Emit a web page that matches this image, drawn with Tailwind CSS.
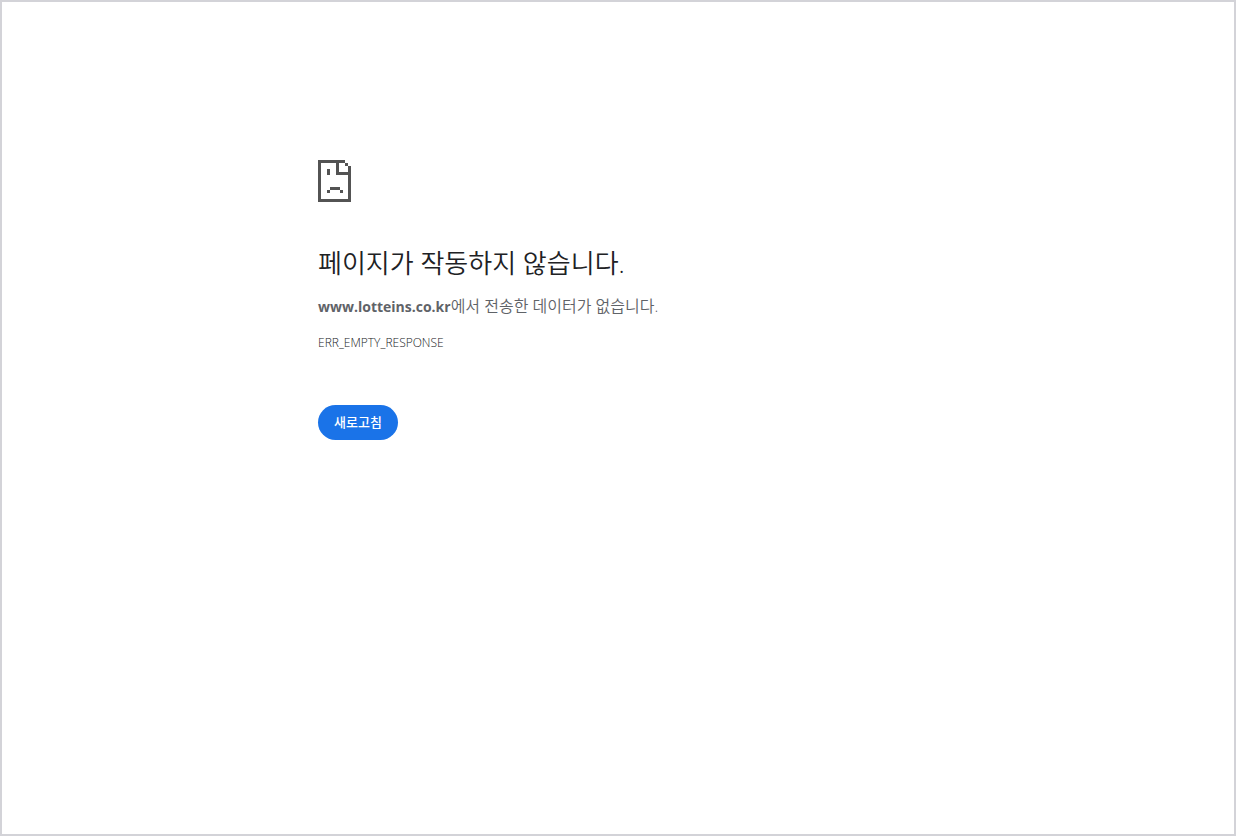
<!DOCTYPE html>
<html lang="ko">
<head>
  <meta charset="UTF-8" />
  <meta name="viewport" content="width=device-width, initial-scale=1.0"/>
  <title>www.lotteins.co.kr</title>
  <script src="https://cdn.jsdelivr.net/npm/@tailwindcss/browser@4"></script>
</head>
<body class="min-h-screen border-2 border-[#d3d3d8] bg-white font-['Open_Sans','Noto_Sans_CJK_KR',sans-serif] text-[#5f6368]">

  <!-- Error content -->
  <main class="mx-auto max-w-[600px] pt-[158px]">
    <svg class="block h-[42px] w-[33px] text-[#535353]" viewBox="0 0 33 42" fill="currentColor" shape-rendering="crispEdges" aria-hidden="true">
      <path d="M0 0h27v3h-6v9h9V6h3v36H0zM3 3v36h27V15H18V3z" fill-rule="evenodd"/>
      <path d="M27 3h3v3h-3zM9 9h3v6H9zM12 27h10v3H12zM9 30h3v3H9zM22 30h3v3h-3z"/>
    </svg>

    <h1 class="mt-[41px] text-[26px] leading-[40px] font-[350] text-[#202124]">페이지가 작동하지 않습니다.</h1>
    <p class="mt-[11px] text-base leading-6 font-[350]"><strong class="text-sm font-bold">www.lotteins.co.kr</strong>에서 전송한 데이터가 없습니다.</p>
    <p class="mt-[13px] text-xs leading-6 font-light text-[#202124]">ERR_EMPTY_RESPONSE</p>

    <button type="button" class="mt-[50px] h-[35px] rounded-full bg-[#1a73e8] px-4 text-[13px] font-medium text-white hover:bg-[#1765cc]">새로고침</button>
  </main>

</body>
</html>
